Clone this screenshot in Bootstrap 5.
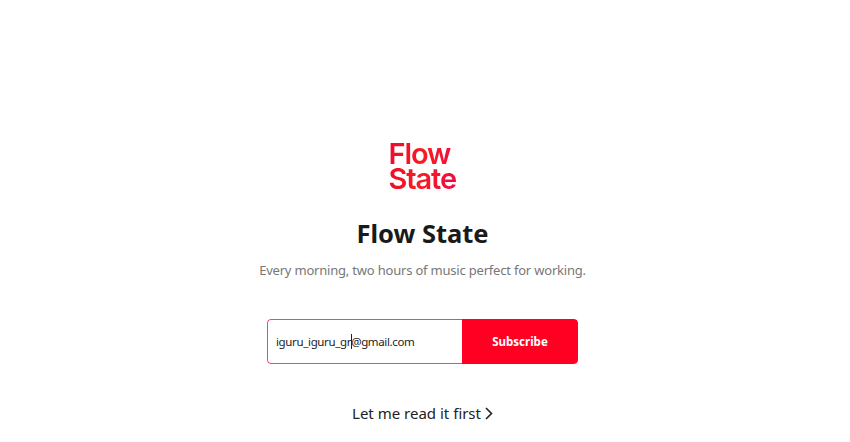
<!DOCTYPE html>
<html lang="en">
<head>
<meta charset="utf-8">
<title>Flow State</title>
<link href="https://cdn.jsdelivr.net/npm/bootstrap@5.3.0/dist/css/bootstrap.min.css" rel="stylesheet">
<style>
html,body{height:442px;overflow:hidden;background:#fff}
.fs-page{width:845px;padding-top:141px;font-family:"Noto Sans","Open Sans",sans-serif}
.fs-logo{font-family:"Inter","Liberation Sans",sans-serif;font-weight:600;font-size:29px;line-height:25px;letter-spacing:-1.1px;width:68px;background:linear-gradient(100deg,#f0082f 0%,#f81c22 50%,#f00848 100%);-webkit-background-clip:text;background-clip:text;color:transparent;height:52px;margin-bottom:22px}
.fs-title{font-weight:700;font-size:25.5px;line-height:36px;color:#1a1a1a;margin:0 0 9px}
.fs-sub{font-size:13px;letter-spacing:-.2px;line-height:20px;color:#777;margin:0 0 39px}
.fs-form{width:311px;height:45px;border-radius:4px;overflow:hidden;margin-bottom:37px}
.fs-email{width:195px;border:1px solid #ff4060;border-right:0;border-radius:4px 0 0 4px;padding:0 8px;font-size:11.5px;letter-spacing:-.35px;color:#222;line-height:43px}
.fs-caret{display:inline-block;width:1px;height:15px;background:#222;vertical-align:-3px;margin-right:-1px}
.fs-btn{flex:1;background:#ff0022;color:#fff;border:0;border-radius:0 4px 4px 0;font-size:11.5px;font-weight:700;padding:0}
.fs-btn:hover{background:#ff0022;color:#fff}
.fs-more{font-size:15px;line-height:24px;color:#222;text-decoration:none}
</style>
</head>
<body>
<main class="fs-page d-flex flex-column align-items-center text-center">
  <div class="fs-logo text-start">Flow<br>State</div>
  <h1 class="fs-title">Flow State</h1>
  <p class="fs-sub">Every morning, two hours of music perfect for working.</p>
  <form class="fs-form d-flex">
    <div class="fs-email text-start">iguru_iguru_gr<span class="fs-caret"></span>@gmail.com</div>
    <button type="button" class="btn fs-btn">Subscribe</button>
  </form>
  <a href="#" class="fs-more d-inline-flex align-items-center gap-1">Let me read it first
    <svg width="8" height="13" viewBox="0 0 8 13" fill="none" stroke="#222" stroke-width="1.6"><path d="M1 1l5.5 5.5L1 12"/></svg>
  </a>
</main>
</body>
</html>
